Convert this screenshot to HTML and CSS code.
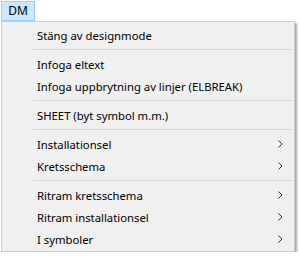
FILE: index.html
```html
<!DOCTYPE html>
<html>
<head>
<meta charset="utf-8">
<link rel="stylesheet" href="styles.css">
</head>
<body>
<div class="menubar">
  <div class="menubar-item active">DM</div>
</div>
<div class="menu">
  <div class="item"><span class="label">Stäng av designmode</span></div>
  <div class="sep"></div>
  <div class="item"><span class="label">Infoga eltext</span></div>
  <div class="item"><span class="label">Infoga uppbrytning av linjer (ELBREAK)</span></div>
  <div class="sep"></div>
  <div class="item"><span class="label">SHEET (byt symbol m.m.)</span></div>
  <div class="sep"></div>
  <div class="item"><span class="label">Installationsel</span><svg class="chev" width="5" height="8" viewBox="0 0 5 8"><path d="M0.5 0.5 L4 4 L0.5 7.5" fill="none" stroke="#333" stroke-width="1"/></svg></div>
  <div class="item"><span class="label">Kretsschema</span><svg class="chev" width="5" height="8" viewBox="0 0 5 8"><path d="M0.5 0.5 L4 4 L0.5 7.5" fill="none" stroke="#333" stroke-width="1"/></svg></div>
  <div class="sep"></div>
  <div class="item"><span class="label">Ritram kretsschema</span><svg class="chev" width="5" height="8" viewBox="0 0 5 8"><path d="M0.5 0.5 L4 4 L0.5 7.5" fill="none" stroke="#333" stroke-width="1"/></svg></div>
  <div class="item"><span class="label">Ritram installationsel</span><svg class="chev" width="5" height="8" viewBox="0 0 5 8"><path d="M0.5 0.5 L4 4 L0.5 7.5" fill="none" stroke="#333" stroke-width="1"/></svg></div>
  <div class="item"><span class="label">I symboler</span><svg class="chev" width="5" height="8" viewBox="0 0 5 8"><path d="M0.5 0.5 L4 4 L0.5 7.5" fill="none" stroke="#333" stroke-width="1"/></svg></div>
</div>
</body>
</html>
```
FILE: styles.css
```css
html, body {
  margin: 0;
  padding: 0;
  background: #ffffff;
  font-family: "Noto Sans", "Liberation Sans", sans-serif;
  font-size: 11.3px;
  color: #000;
}
.menubar {
  height: 21px;
  display: flex;
  align-items: flex-start;
  padding: 1px 0 0 1px;
  box-sizing: border-box;
}
.menubar-item {
  width: 34px;
  height: 20px;
  box-sizing: border-box;
  display: flex;
  align-items: center;
  justify-content: center;
  line-height: 1;
  font-size: 12px;
}
.menubar-item.active {
  background: #cce8ff;
  border: 1px solid #99d1ff;
}
.menu {
  margin-left: 1px;
  width: 294px;
  box-sizing: border-box;
  background: #f0f0f0;
  border: 1px solid #cccccc;
  padding: 2px 2px 1px 2px;
  box-shadow: 2px 2px 2px rgba(0,0,0,0.35);
}
.item {
  height: 22px;
  display: flex;
  align-items: center;
  padding-left: 33px;
  padding-right: 9px;
}
.label {
  flex: 1;
  white-space: nowrap;
}
.chev {
  display: block;
}
.sep {
  height: 7px;
  display: flex;
  align-items: center;
  padding-left: 29px;
}
.sep::before {
  content: "";
  display: block;
  flex: 1;
  height: 1px;
  background: #d7d7d7;
}
```
